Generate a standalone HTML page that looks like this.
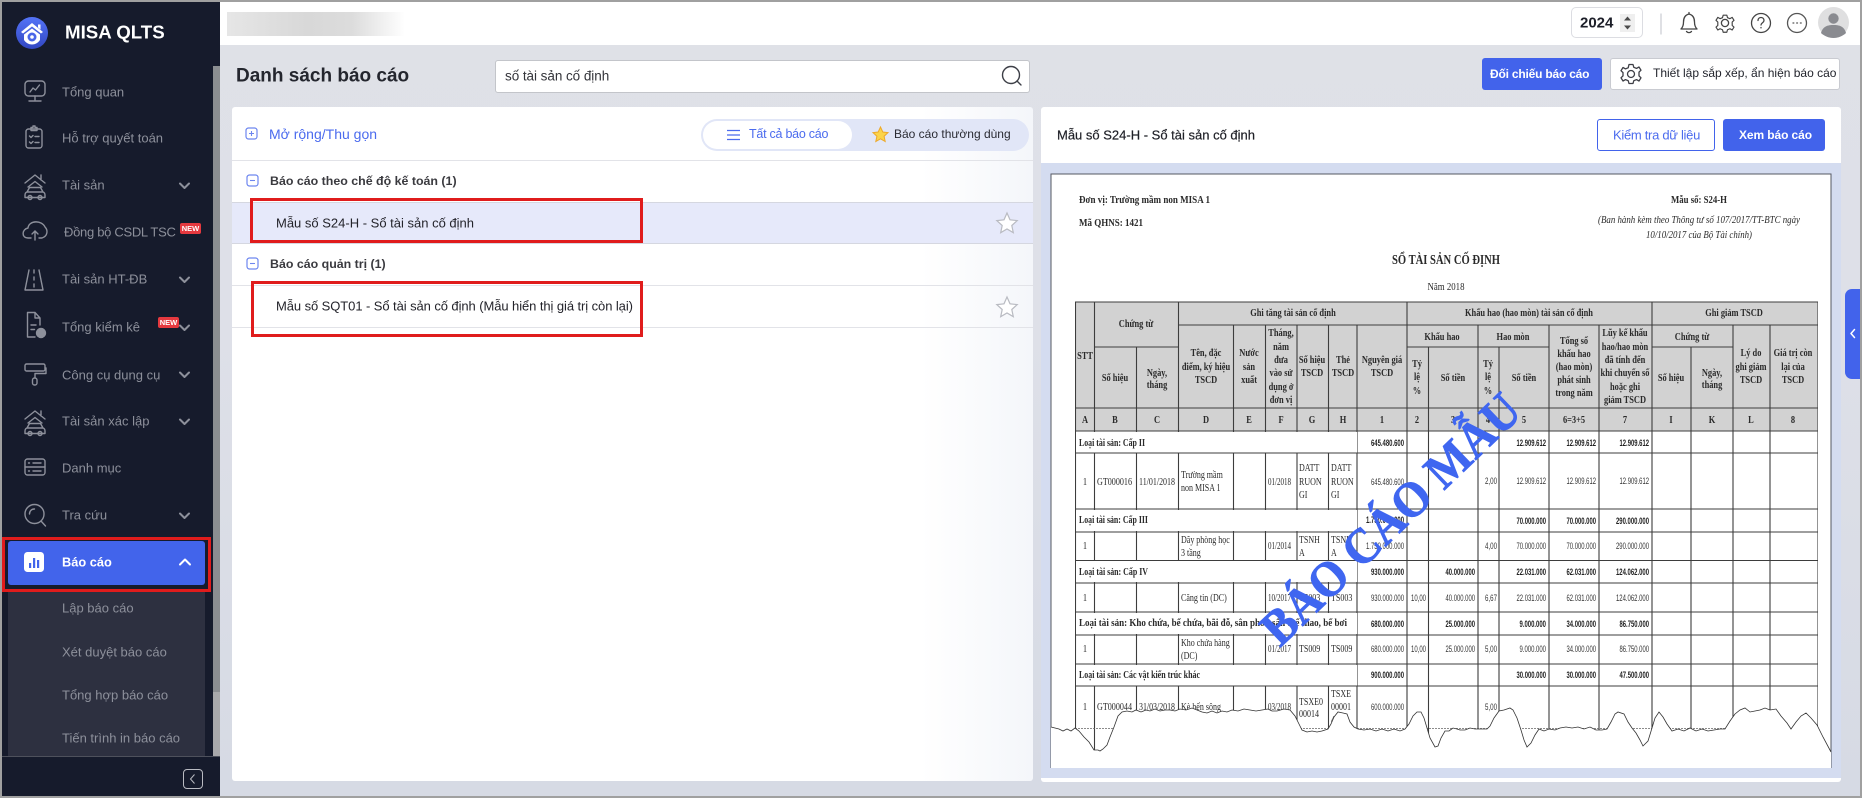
<!DOCTYPE html>
<html lang="vi"><head><meta charset="utf-8"><title>Danh sách báo cáo</title>
<style>
*{box-sizing:border-box}
html,body{margin:0;padding:0;width:1862px;height:798px;overflow:hidden;background:#a0a0a0;font-family:"Liberation Sans","Noto Sans CJK SC",sans-serif}
.b{position:absolute}
.t{position:absolute;white-space:nowrap;line-height:1;transform:translateY(-50%)}
.s{color:#8d909b;font-size:13px;left:62px}
.g{font-size:12.400px;font-weight:700;color:#3a3a3f}
.i{font-size:13px;color:#23232a;left:276px}
.line{position:absolute;height:1px;background:#e2e3e8;left:232px;width:801px}
svg{position:absolute;overflow:visible}
.ic{fill:none;stroke:#8d909b;stroke-width:1.4;stroke-linecap:round;stroke-linejoin:round}
.ch{fill:none;stroke:#8d909b;stroke-width:2;stroke-linecap:round;stroke-linejoin:round}
.d text{font-family:"Liberation Serif",serif;font-size:10px;fill:#2a2a2a}
.d .h{font-weight:700;text-anchor:middle}
.d .l{font-weight:700}
.d .c{text-anchor:middle}
.d .n{font-family:"Liberation Sans",sans-serif;font-size:9.500px;text-anchor:end;fill:#333}
.d .nb{font-family:"Liberation Sans",sans-serif;font-size:9.500px;font-weight:700;text-anchor:end;fill:#222}
.d .tb .h,.d .tb .c{transform-box:fill-box;transform-origin:center;transform:scaleX(.84)}
.d .tb .p{transform-box:fill-box;transform-origin:left center;transform:scaleX(.8)}
</style></head><body>
<!-- app background -->
<div class="b" style="left:220px;top:2px;width:1640px;height:794px;background:linear-gradient(180deg,#dfe1e7 0,#dee0e8 40%,#d6dae4 100%)"></div>
<!-- header -->
<div class="b" style="left:220px;top:2px;width:1640px;height:43px;background:#fff"></div>
<div class="b" style="left:227px;top:12px;width:178px;height:24px;background:linear-gradient(90deg,#e6e6e6,#d8d8d8 45%,#dcdcdc 70%,#fff 100%)"></div>
<div class="b" style="left:1571px;top:7px;width:72px;height:31px;border:1px solid #dcdde2;border-radius:5px;background:#fff"></div>
<div class="t" style="left:1580px;top:23px;font-size:15px;font-weight:700;color:#1d1f29">2024</div>
<div class="b" style="left:1620px;top:14px;width:15px;height:18px;background:#efefef"></div>
<svg style="left:0;top:0" width="1862" height="50"><path d="M1624 20.500l3.500-4 3.500 4zM1624 25.500l3.500 4 3.500-4z" fill="#4a4a4a"/>
<path d="M1661 13.500v21" stroke="#c9ccd2" stroke-width="1.2"/>
<g fill="none" stroke="#444" stroke-width="1.3" stroke-linecap="round" stroke-linejoin="round">
<path d="M1681 29h16c-2-2-2.500-4-2.500-7 0-4-1.500-7-5.500-8-4 1-5.500 4-5.500 8 0 3-.5 5-2.500 7zM1686.500 31.500c1.500 1.500 3.500 1.500 5 0M1689 14v-1.500"/>
<circle cx="1725" cy="23" r="3.600"/><path d="M1723 13.500h4l.8 2.800 2.700 1.100 2.500-1.400 2 3.200-2 1.900v3.800l2 1.900-2 3.200-2.500-1.400-2.700 1.100-.8 2.800h-4l-.8-2.800-2.700-1.100-2.500 1.400-2-3.200 2-1.900v-3.800l-2-1.900 2-3.200 2.500 1.400 2.700-1.100z" transform="translate(172.500 3) scale(.9)"/>
<circle cx="1761" cy="23" r="9.500"/><path d="M1758 20.500c0-4 6-4 6 0 0 2.200-3 2.300-3 4.500"/><path d="M1761 27.500v.4"/>
<circle cx="1797" cy="23" r="9.500" stroke="#555"/></g>
<path d="M1793 23h.8M1796.700 23h.8M1800.400 23h.8" stroke="#555" stroke-width="1.300" stroke-linecap="round"/>
<circle cx="1833.500" cy="22.500" r="15.500" fill="#dfdfe0"/><circle cx="1833.500" cy="18.500" r="5.200" fill="#8a8b90"/><path d="M1821 33c2-7 7-8 12.500-8s10.500 1 12.500 8c-3 3-8 5-12.500 5s-9.500-2-12.500-5z" fill="#8a8b90"/>
</svg>

<!-- title row -->
<div class="t" style="left:236px;top:76px;font-size:19px;font-weight:700;color:#24262e">Danh sách báo cáo</div>
<div class="b" style="left:495px;top:60px;width:535px;height:33px;background:#fff;border:1px solid #c3c5ca;border-radius:3px"></div>
<div class="t" style="left:505px;top:76px;font-size:13.500px;color:#33343a;letter-spacing:-.05px">số tài sản cố định</div>
<svg style="left:1000px;top:64px" width="24" height="24"><circle cx="11" cy="11" r="8.500" fill="none" stroke="#3d3f47" stroke-width="1.400"/><path d="M17 17l4 4" stroke="#3d3f47" stroke-width="1.400" stroke-linecap="round"/></svg>
<div class="b" style="left:1482px;top:58px;width:120px;height:32px;background:#4263eb;border-radius:3px"></div>
<div class="t" style="left:1490px;top:74px;font-size:12px;font-weight:700;color:#fff;letter-spacing:-.2px">Đối chiếu báo cáo</div>
<div class="b" style="left:1610px;top:58px;width:230px;height:32px;background:#fff;border:1px solid #c9cbd1;border-radius:3px"></div>
<svg style="left:1620px;top:63px" width="22" height="22"><g fill="none" stroke="#3e3f46" stroke-width="1.300" stroke-linejoin="round"><circle cx="11" cy="11" r="3.500"/><path d="M9 1.500h4l.8 2.800 2.700 1.100 2.500-1.400 2 3.200-2 1.900v3.800l2 1.900-2 3.200-2.500-1.400-2.700 1.100-.8 2.800h-4l-.8-2.800-2.700-1.100-2.500 1.400-2-3.200 2-1.900V9.600L1 7.700l2-3.200 2.500 1.400 2.700-1.100z"/></g></svg>
<div class="t" style="left:1653px;top:73px;font-size:12px;color:#22242c">Thiết lập sắp xếp, ẩn hiện báo cáo</div>

<!-- left panel -->
<div class="b" style="left:232px;top:107px;width:801px;height:674px;background:linear-gradient(90deg,#fff 86%,#f4f6fa 100%);border-radius:3px"></div>
<svg style="left:244px;top:126px" width="16" height="16"><rect x="2" y="2" width="11" height="11" rx="2.500" fill="none" stroke="#6d86ef" stroke-width="1.200"/><path d="M5 7.500h5M7.500 5v5" stroke="#6d86ef" stroke-width="1.100"/></svg>
<div class="t" style="left:269px;top:134px;font-size:14px;color:#4b6bee">Mở rộng/Thu gọn</div>
<div class="b" style="left:701px;top:119px;width:328px;height:32px;background:#e1e6f7;border-radius:16px"></div>
<div class="b" style="left:703px;top:121px;width:149px;height:28px;background:#fff;border-radius:14px"></div>
<svg style="left:726px;top:128px" width="16" height="14"><path d="M1 2.500h13M1 7h13M1 11.500h13" stroke="#4b6bee" stroke-width="1.200"/></svg>
<div class="t" style="left:749px;top:134px;font-size:12.500px;color:#4b6bee;letter-spacing:-.25px">Tất cả báo cáo</div>
<svg style="left:871.500px;top:126px" width="17" height="17"><path d="M8.500 1l2.300 5 5.200.6-3.900 3.600 1.100 5.300-4.700-2.700-4.700 2.700 1.100-5.300L1 6.600 6.200 6z" fill="#fbd44a" stroke="#eda92b" stroke-width="1"/></svg>
<div class="t" style="left:894px;top:134px;font-size:12px;color:#2a2b33">Báo cáo thường dùng</div>
<div class="line" style="top:160px"></div>
<svg style="left:245px;top:173px" width="16" height="16"><rect x="2" y="2" width="11" height="11" rx="2.500" fill="none" stroke="#6d86ef" stroke-width="1.200"/><path d="M5 7.500h5" stroke="#6d86ef" stroke-width="1.100"/></svg>
<div class="t g" style="left:270px;top:181px">Báo cáo theo chế độ kế toán (1)</div>
<div class="b" style="left:232px;top:203px;width:801px;height:40px;background:#e6e9fa"></div>
<div class="line" style="top:202px;background:#d5d7e0"></div>
<div class="t i" style="top:223px">Mẫu số S24-H - Sổ tài sản cố định</div>
<div class="line" style="top:243px;background:#d5d7e0"></div>
<svg style="left:245px;top:256px" width="16" height="16"><rect x="2" y="2" width="11" height="11" rx="2.500" fill="none" stroke="#6d86ef" stroke-width="1.200"/><path d="M5 7.500h5" stroke="#6d86ef" stroke-width="1.100"/></svg>
<div class="t g" style="left:270px;top:264px">Báo cáo quản trị (1)</div>
<div class="line" style="top:285px"></div>
<div class="t i" style="top:306px;letter-spacing:-.08px">Mẫu số SQT01 - Sổ tài sản cố định (Mẫu hiển thị giá trị còn lại)</div>
<div class="line" style="top:327px"></div>
<svg style="left:995px;top:211px" width="24" height="24"><path d="M12 2l3 6.800 7.200.8-5.400 4.900 1.500 7.200-6.300-3.700-6.300 3.700 1.500-7.200L1.800 9.600 9 8.800z" fill="#fff" stroke="#b9bbc2" stroke-width="1.200"/></svg>
<svg style="left:995px;top:295px" width="24" height="24"><path d="M12 2l3 6.800 7.200.8-5.400 4.900 1.500 7.200-6.300-3.700-6.300 3.700 1.500-7.200L1.800 9.600 9 8.800z" fill="#fff" stroke="#b9bbc2" stroke-width="1.200"/></svg>
<div class="b" style="left:250px;top:198px;width:393px;height:45px;border:3px solid #e01c1c"></div>
<div class="b" style="left:251px;top:281px;width:392px;height:56px;border:3px solid #e01c1c"></div>

<!-- right panel -->
<div class="b" style="left:1041px;top:107px;width:800px;height:675px;background:#fff;border-radius:3px"></div>
<div class="b" style="left:1041px;top:163px;width:800px;height:615px;background:#d4dcf0"></div>
<div class="t" style="left:1057px;top:135px;font-size:13px;font-weight:400;color:#1f2027;-webkit-text-stroke:.2px #1f2027">Mẫu số S24-H - Sổ tài sản cố định</div>
<div class="b" style="left:1597px;top:119px;width:118px;height:32px;background:#fff;border:1px solid #4263eb;border-radius:3px"></div>
<div class="t" style="left:1613px;top:135px;font-size:13px;color:#4b6bee;letter-spacing:-.3px">Kiểm tra dữ liệu</div>
<div class="b" style="left:1723px;top:119px;width:102px;height:32px;background:#4263eb;border-radius:3px"></div>
<div class="t" style="left:1739px;top:135px;font-size:12px;font-weight:700;color:#fff;letter-spacing:-.1px">Xem báo cáo</div>

<!-- document -->
<svg class="d" style="left:0;top:0" width="1862" height="798">
<defs><filter id="bl" x="0" y="0" width="1" height="1"><feGaussianBlur stdDeviation=".28"/></filter></defs>
<rect x="1051" y="174" width="780" height="594" fill="#fff"/>
<path d="M1051 768V174H1831V768" fill="none" stroke="#555862" stroke-width="1"/>
<g filter="url(#bl)" class="tb">
<rect x="1075" y="302" width="743" height="129" fill="#d2d2d2"/>
<text x="1079" y="203" class="l" style="font-size:10.500px" textLength="131" lengthAdjust="spacingAndGlyphs">Đơn vị:  Trường mầm non MISA 1</text>
<text x="1079" y="226" class="l" style="font-size:10.500px" textLength="64" lengthAdjust="spacingAndGlyphs">Mã QHNS:  1421</text>
<text x="1446" y="264" class="l" style="font-size:13.500px;text-anchor:middle" textLength="108" lengthAdjust="spacingAndGlyphs">SỔ TÀI SẢN CỐ ĐỊNH</text>
<text x="1446" y="290" style="font-size:10.500px;text-anchor:middle" textLength="37" lengthAdjust="spacingAndGlyphs">Năm 2018</text>
<text x="1699" y="203" class="l" style="font-size:10.500px;text-anchor:middle" textLength="56" lengthAdjust="spacingAndGlyphs">Mẫu số: S24-H</text>
<text x="1699" y="223" style="font-size:10.500px;font-style:italic;text-anchor:middle" textLength="202" lengthAdjust="spacingAndGlyphs">(Ban hành kèm theo Thông tư số 107/2017/TT-BTC ngày</text>
<text x="1699" y="238" style="font-size:10.500px;font-style:italic;text-anchor:middle" textLength="106" lengthAdjust="spacingAndGlyphs">10/10/2017 của Bộ Tài chính)</text>

<g fill="none" stroke="#3c3c3c" stroke-width="1.100">
<path d="M1075 302H1818M1178 325H1818M1094 347H1178M1407 347H1549M1652 347H1733M1075 408H1818M1075 431H1818M1075 453H1818M1075 509H1818M1075 532H1818M1075 560.500H1818M1075 583H1818M1075 612H1818M1075 635H1818M1075 664H1818M1075 686H1818"/>
<path d="M1075.500 302V765M1094.500 302V765M1136.500 347V765M1178.500 302V765M1233.500 325V765M1265.500 325V765M1297 325V765M1328.500 325V765M1357 325V765M1407 302V765M1428.500 347V765M1478 325V765M1499 347V765M1549 325V765M1599 325V765M1652 302V765M1691 347V765M1733 325V765M1770 325V765M1818 302V765"/>
</g>
<rect x="1076" y="432" width="281" height="20.500" fill="#fff"/><rect x="1076" y="510" width="281" height="21" fill="#fff"/><rect x="1076" y="561" width="281" height="21" fill="#fff"/><rect x="1076" y="613" width="281" height="21" fill="#fff"/><rect x="1076" y="665" width="281" height="20.500" fill="#fff"/>

<text x="1293" y="316" class="h">Ghi tăng tài sản cố định</text>
<text x="1529" y="316" class="h">Khấu hao (hao mòn) tài sản cố định</text>
<text x="1734" y="316" class="h">Ghi giảm TSCD</text>
<text x="1136" y="327" class="h">Chứng từ</text>
<text x="1085" y="359" class="h">STT</text>
<text x="1442" y="340" class="h">Khấu hao</text><text x="1513" y="340" class="h">Hao mòn</text><text x="1692" y="340" class="h">Chứng từ</text>
<text x="1115" y="381" class="h">Số hiệu</text><text x="1157" y="376" class="h">Ngày,</text><text x="1157" y="388" class="h">tháng</text>
<text x="1206" y="356" class="h">Tên, đặc</text><text x="1206" y="370" class="h">điểm, ký hiệu</text><text x="1206" y="383" class="h">TSCD</text>
<text x="1249" y="356" class="h">Nước</text><text x="1249" y="370" class="h">sản</text><text x="1249" y="383" class="h">xuất</text>
<text x="1281" y="336" class="h">Tháng,</text><text x="1281" y="350" class="h">năm</text><text x="1281" y="363" class="h">đưa</text><text x="1281" y="376" class="h">vào sử</text><text x="1281" y="390" class="h">dụng ở</text><text x="1281" y="403" class="h">đơn vị</text>
<text x="1312" y="363" class="h">Số hiệu</text><text x="1312" y="376" class="h">TSCD</text>
<text x="1343" y="363" class="h">Thẻ</text><text x="1343" y="376" class="h">TSCD</text>
<text x="1382" y="363" class="h">Nguyên giá</text><text x="1382" y="376" class="h">TSCD</text>
<text x="1417" y="367" class="h">Tỷ</text><text x="1417" y="380" class="h">lệ</text><text x="1417" y="394" class="h">%</text>
<text x="1453" y="381" class="h">Số tiền</text>
<text x="1488" y="367" class="h">Tỷ</text><text x="1488" y="380" class="h">lệ</text><text x="1488" y="394" class="h">%</text>
<text x="1524" y="381" class="h">Số tiền</text>
<text x="1574" y="344" class="h">Tổng số</text><text x="1574" y="357" class="h">khấu hao</text><text x="1574" y="370" class="h">(hao mòn)</text><text x="1574" y="383" class="h">phát sinh</text><text x="1574" y="396" class="h">trong năm</text>
<text x="1625" y="336" class="h">Lũy kế khấu</text><text x="1625" y="350" class="h">hao/hao mòn</text><text x="1625" y="363" class="h">đã tính đến</text><text x="1625" y="376" class="h">khi chuyển số</text><text x="1625" y="390" class="h">hoặc ghi</text><text x="1625" y="403" class="h">giảm TSCD</text>
<text x="1671" y="381" class="h">Số hiệu</text><text x="1712" y="376" class="h">Ngày,</text><text x="1712" y="388" class="h">tháng</text>
<text x="1751" y="356" class="h">Lý do</text><text x="1751" y="370" class="h">ghi giảm</text><text x="1751" y="383" class="h">TSCD</text>
<text x="1793" y="356" class="h">Giá trị còn</text><text x="1793" y="370" class="h">lại của</text><text x="1793" y="383" class="h">TSCD</text>

<g><text x="1085" y="423" class="h">A</text><text x="1115" y="423" class="h">B</text><text x="1157" y="423" class="h">C</text><text x="1206" y="423" class="h">D</text><text x="1249" y="423" class="h">E</text><text x="1281" y="423" class="h">F</text><text x="1312" y="423" class="h">G</text><text x="1343" y="423" class="h">H</text><text x="1382" y="423" class="h">1</text><text x="1417" y="423" class="h">2</text><text x="1453" y="423" class="h">3</text><text x="1488" y="423" class="h">4</text><text x="1524" y="423" class="h">5</text><text x="1574" y="423" class="h">6=3+5</text><text x="1625" y="423" class="h">7</text><text x="1671" y="423" class="h">I</text><text x="1712" y="423" class="h">K</text><text x="1751" y="423" class="h">L</text><text x="1793" y="423" class="h">8</text></g>

<text x="1079" y="446" class="l" textLength="66" lengthAdjust="spacingAndGlyphs">Loại tài sản: Cấp II</text>
<text x="1404" y="446" class="nb" textLength="33" lengthAdjust="spacingAndGlyphs">645.480.600</text>
<text x="1546" y="446" class="nb" textLength="29.500" lengthAdjust="spacingAndGlyphs">12.909.612</text><text x="1596" y="446" class="nb" textLength="29.500" lengthAdjust="spacingAndGlyphs">12.909.612</text><text x="1649" y="446" class="nb" textLength="29.500" lengthAdjust="spacingAndGlyphs">12.909.612</text>

<text x="1085" y="485" class="c">1</text><text x="1097" y="485" textLength="35" lengthAdjust="spacingAndGlyphs">GT000016</text><text x="1139" y="485" textLength="36" lengthAdjust="spacingAndGlyphs">11/01/2018</text>
<text x="1181" y="478" class="p">Trường mầm</text><text x="1181" y="491" class="p">non MISA 1</text><text x="1268" y="485" textLength="23" lengthAdjust="spacingAndGlyphs">01/2018</text>
<text x="1299" y="471" class="p">DATT</text><text x="1299" y="485" class="p">RUON</text><text x="1299" y="498" class="p">GI</text><text x="1331" y="471" class="p">DATT</text><text x="1331" y="485" class="p">RUON</text><text x="1331" y="498" class="p">GI</text>
<text x="1404" y="485" class="n" textLength="33" lengthAdjust="spacingAndGlyphs">645.480.600</text><text x="1497" y="484" class="n" textLength="12" lengthAdjust="spacingAndGlyphs">2,00</text>
<text x="1546" y="484" class="n" textLength="29.500" lengthAdjust="spacingAndGlyphs">12.909.612</text><text x="1596" y="484" class="n" textLength="29.500" lengthAdjust="spacingAndGlyphs">12.909.612</text><text x="1649" y="484" class="n" textLength="29.500" lengthAdjust="spacingAndGlyphs">12.909.612</text>

<text x="1079" y="523" class="l" textLength="69" lengthAdjust="spacingAndGlyphs">Loại tài sản: Cấp III</text>
<text x="1404" y="523" class="nb" textLength="38" lengthAdjust="spacingAndGlyphs">1.750.000.000</text>
<text x="1546" y="524" class="nb" textLength="29.500" lengthAdjust="spacingAndGlyphs">70.000.000</text><text x="1596" y="524" class="nb" textLength="29.500" lengthAdjust="spacingAndGlyphs">70.000.000</text><text x="1649" y="524" class="nb" textLength="33" lengthAdjust="spacingAndGlyphs">290.000.000</text>

<text x="1085" y="549" class="c">1</text><text x="1181" y="543" class="p">Dãy phòng học</text><text x="1181" y="556" class="p">3 tầng</text><text x="1268" y="549" textLength="23" lengthAdjust="spacingAndGlyphs">01/2014</text>
<text x="1299" y="543" class="p">TSNH</text><text x="1299" y="556" class="p">A</text><text x="1331" y="543" class="p">TSNH</text><text x="1331" y="556" class="p">A</text>
<text x="1404" y="549" class="n" textLength="38" lengthAdjust="spacingAndGlyphs">1.750.000.000</text><text x="1497" y="549" class="n" textLength="12" lengthAdjust="spacingAndGlyphs">4,00</text>
<text x="1546" y="549" class="n" textLength="29.500" lengthAdjust="spacingAndGlyphs">70.000.000</text><text x="1596" y="549" class="n" textLength="29.500" lengthAdjust="spacingAndGlyphs">70.000.000</text><text x="1649" y="549" class="n" textLength="33" lengthAdjust="spacingAndGlyphs">290.000.000</text>

<text x="1079" y="575" class="l" textLength="69" lengthAdjust="spacingAndGlyphs">Loại tài sản: Cấp IV</text>
<text x="1404" y="575" class="nb" textLength="33" lengthAdjust="spacingAndGlyphs">930.000.000</text><text x="1475" y="575" class="nb" textLength="29.500" lengthAdjust="spacingAndGlyphs">40.000.000</text>
<text x="1546" y="575" class="nb" textLength="29.500" lengthAdjust="spacingAndGlyphs">22.031.000</text><text x="1596" y="575" class="nb" textLength="29.500" lengthAdjust="spacingAndGlyphs">62.031.000</text><text x="1649" y="575" class="nb" textLength="33" lengthAdjust="spacingAndGlyphs">124.062.000</text>

<text x="1085" y="601" class="c">1</text><text x="1181" y="601" class="p">Căng tin (DC)</text><text x="1268" y="601" textLength="23" lengthAdjust="spacingAndGlyphs">10/2017</text><text x="1299" y="601" class="p">TS003</text><text x="1331" y="601" class="p">TS003</text>
<text x="1404" y="601" class="n" textLength="33" lengthAdjust="spacingAndGlyphs">930.000.000</text><text x="1426" y="601" class="n" textLength="15" lengthAdjust="spacingAndGlyphs">10,00</text><text x="1475" y="601" class="n" textLength="29.500" lengthAdjust="spacingAndGlyphs">40.000.000</text><text x="1497" y="601" class="n" textLength="12" lengthAdjust="spacingAndGlyphs">6,67</text>
<text x="1546" y="601" class="n" textLength="29.500" lengthAdjust="spacingAndGlyphs">22.031.000</text><text x="1596" y="601" class="n" textLength="29.500" lengthAdjust="spacingAndGlyphs">62.031.000</text><text x="1649" y="601" class="n" textLength="33" lengthAdjust="spacingAndGlyphs">124.062.000</text>

<text x="1079" y="626" class="l" textLength="268" lengthAdjust="spacingAndGlyphs">Loại tài sản: Kho chứa, bể chứa, bãi đỗ, sân phơi, sân thể thao, bể bơi</text>
<text x="1404" y="627" class="nb" textLength="33" lengthAdjust="spacingAndGlyphs">680.000.000</text><text x="1475" y="627" class="nb" textLength="29.500" lengthAdjust="spacingAndGlyphs">25.000.000</text>
<text x="1546" y="627" class="nb" textLength="26.500" lengthAdjust="spacingAndGlyphs">9.000.000</text><text x="1596" y="627" class="nb" textLength="29.500" lengthAdjust="spacingAndGlyphs">34.000.000</text><text x="1649" y="627" class="nb" textLength="29.500" lengthAdjust="spacingAndGlyphs">86.750.000</text>

<text x="1085" y="652" class="c">1</text><text x="1181" y="646" class="p">Kho chứa hàng</text><text x="1181" y="659" class="p">(DC)</text><text x="1268" y="652" textLength="23" lengthAdjust="spacingAndGlyphs">01/2017</text><text x="1299" y="652" class="p">TS009</text><text x="1331" y="652" class="p">TS009</text>
<text x="1404" y="652" class="n" textLength="33" lengthAdjust="spacingAndGlyphs">680.000.000</text><text x="1426" y="652" class="n" textLength="15" lengthAdjust="spacingAndGlyphs">10,00</text><text x="1475" y="652" class="n" textLength="29.500" lengthAdjust="spacingAndGlyphs">25.000.000</text><text x="1497" y="652" class="n" textLength="12" lengthAdjust="spacingAndGlyphs">5,00</text>
<text x="1546" y="652" class="n" textLength="26.500" lengthAdjust="spacingAndGlyphs">9.000.000</text><text x="1596" y="652" class="n" textLength="29.500" lengthAdjust="spacingAndGlyphs">34.000.000</text><text x="1649" y="652" class="n" textLength="29.500" lengthAdjust="spacingAndGlyphs">86.750.000</text>

<text x="1079" y="678" class="l" textLength="121" lengthAdjust="spacingAndGlyphs">Loại tài sản: Các vật kiến trúc khác</text>
<text x="1404" y="678" class="nb" textLength="33" lengthAdjust="spacingAndGlyphs">900.000.000</text>
<text x="1546" y="678" class="nb" textLength="29.500" lengthAdjust="spacingAndGlyphs">30.000.000</text><text x="1596" y="678" class="nb" textLength="29.500" lengthAdjust="spacingAndGlyphs">30.000.000</text><text x="1649" y="678" class="nb" textLength="29.500" lengthAdjust="spacingAndGlyphs">47.500.000</text>

<text x="1085" y="710" class="c">1</text><text x="1097" y="710" textLength="35" lengthAdjust="spacingAndGlyphs">GT000044</text><text x="1139" y="710" textLength="36" lengthAdjust="spacingAndGlyphs">31/03/2018</text><text x="1181" y="710" class="p">Kè bến sông</text><text x="1268" y="710" textLength="23" lengthAdjust="spacingAndGlyphs">03/2018</text>
<text x="1299" y="705" class="p">TSXE0</text><text x="1299" y="717" class="p">00014</text><text x="1331" y="697" class="p">TSXE</text><text x="1331" y="710" class="p">00001</text><text x="1331" y="723" class="p">4</text>
<text x="1404" y="710" class="n" textLength="33" lengthAdjust="spacingAndGlyphs">600.000.000</text><text x="1497" y="710" class="n" textLength="12" lengthAdjust="spacingAndGlyphs">5,00</text>
<path d="M1075 728.500H1818" stroke="#666" stroke-width=".8" stroke-dasharray="2 1"/>
</g>
<!-- torn edge -->
<path d="M1051 727L1055 728 1059 729 1063 731 1067 729 1071 731 1075 728 1079 731 1084 737 1089 742 1094 750 1098 750 1100 751 1103 749 1107 745 1110 737 1114 727 1118 716 1122 712 1127 711 1132 712 1136 710 1141 712 1146 710 1150 711 1155 709 1160 711 1165 710 1170 710 1175 711 1180 709 1186 710 1192 708 1197 710 1202 712 1207 713 1212 711 1217 713 1222 711 1227 712 1232 710 1238 711 1244 709 1250 710 1256 711 1262 710 1268 709 1272 711 1277 711 1284 709 1290 710 1295 716 1299 724 1302 730 1307 732 1312 731 1317 732 1322 731 1328 729 1331 724 1334 717 1338 712 1343 713 1347 714 1350 722 1354 727 1358 729 1364 730 1370 729 1376 731 1382 729 1388 731 1394 729 1400 731 1405 729 1409 724 1413 716 1417 712 1421 712 1424 718 1427 728 1430 738 1435 747 1438 746 1441 738 1445 731 1449 731 1453 728 1457 729 1460 730 1465 730 1470 728 1475 729 1480 729 1487 729 1490 726 1494 718 1499 711 1504 710 1510 708 1513 710 1517 718 1521 730 1524 740 1527 747 1531 743 1535 735 1539 729 1544 731 1549 729 1555 730 1560 728 1566 727 1572 728 1578 727 1584 729 1590 727 1596 730 1602 730 1607 729 1611 722 1615 714 1618 712 1624 714 1628 722 1632 728 1636 733 1640 740 1643 746 1648 741 1652 728 1655 718 1659 712 1663 717 1667 724 1672 731 1678 729 1684 731 1690 728 1696 731 1702 729 1708 731 1714 730 1720 729 1725 729 1730 721 1735 714 1740 710 1745 708 1750 712 1755 711 1760 710 1765 708 1770 710 1776 709 1781 716 1787 723 1791 729 1796 722 1801 716 1806 713 1811 718 1817 725 1823 737 1831 752V768H1051z" fill="#fff" stroke="none"/>
<path d="M1051 727L1055 728 1059 729 1063 731 1067 729 1071 731 1075 728 1079 731 1084 737 1089 742 1094 750 1098 750 1100 751 1103 749 1107 745 1110 737 1114 727 1118 716 1122 712 1127 711 1132 712 1136 710 1141 712 1146 710 1150 711 1155 709 1160 711 1165 710 1170 710 1175 711 1180 709 1186 710 1192 708 1197 710 1202 712 1207 713 1212 711 1217 713 1222 711 1227 712 1232 710 1238 711 1244 709 1250 710 1256 711 1262 710 1268 709 1272 711 1277 711 1284 709 1290 710 1295 716 1299 724 1302 730 1307 732 1312 731 1317 732 1322 731 1328 729 1331 724 1334 717 1338 712 1343 713 1347 714 1350 722 1354 727 1358 729 1364 730 1370 729 1376 731 1382 729 1388 731 1394 729 1400 731 1405 729 1409 724 1413 716 1417 712 1421 712 1424 718 1427 728 1430 738 1435 747 1438 746 1441 738 1445 731 1449 731 1453 728 1457 729 1460 730 1465 730 1470 728 1475 729 1480 729 1487 729 1490 726 1494 718 1499 711 1504 710 1510 708 1513 710 1517 718 1521 730 1524 740 1527 747 1531 743 1535 735 1539 729 1544 731 1549 729 1555 730 1560 728 1566 727 1572 728 1578 727 1584 729 1590 727 1596 730 1602 730 1607 729 1611 722 1615 714 1618 712 1624 714 1628 722 1632 728 1636 733 1640 740 1643 746 1648 741 1652 728 1655 718 1659 712 1663 717 1667 724 1672 731 1678 729 1684 731 1690 728 1696 731 1702 729 1708 731 1714 730 1720 729 1725 729 1730 721 1735 714 1740 710 1745 708 1750 712 1755 711 1760 710 1765 708 1770 710 1776 709 1781 716 1787 723 1791 729 1796 722 1801 716 1806 713 1811 718 1817 725 1823 737 1831 752" fill="none" stroke="#333" stroke-width=".8"/>
<text x="0" y="0" transform="translate(1280 648) rotate(-43.800)" style="font-family:'Liberation Serif',serif;font-weight:700;font-size:50px;fill:#3f66f0;stroke:#3f66f0;stroke-width:.8px" textLength="338" lengthAdjust="spacingAndGlyphs">BÁO CÁO MẪU</text>
</svg>

<!-- right handle -->
<div class="b" style="left:1845px;top:289px;width:15px;height:90px;background:#4263eb;border-radius:7px 0 0 7px"></div>
<svg style="left:1849px;top:328px" width="8" height="11"><path d="M5.500 1.500L2 5.500l3.500 4" fill="none" stroke="#fff" stroke-width="1.500" stroke-linecap="round" stroke-linejoin="round"/></svg>

<!-- sidebar -->
<div class="b" style="left:2px;top:2px;width:218px;height:794px;background:#161b2c"></div>
<div class="b" style="left:213px;top:66px;width:7px;height:626px;background:#8b8e91"></div>
<div class="b" style="left:213px;top:692px;width:7px;height:64px;background:#a9a9ab"></div>
<svg style="left:16px;top:17px" width="32" height="32"><defs><linearGradient id="lg" x1="0" y1="0" x2="0" y2="1"><stop offset="0" stop-color="#5473f7"/><stop offset="1" stop-color="#3247c2"/></linearGradient></defs><circle cx="16" cy="16" r="16" fill="url(#lg)"/><path d="M5 15L16 6l11 9-2 1.500L16 9.500 7 16.500z" fill="#fff"/><path d="M22 7.500h2.500v5L22 10.500z" fill="#fff"/><path d="M8 17.500l8-6 8 6V23c-2 3-5 4.500-8 4.500S10 26 8 23z" fill="#fff"/><circle cx="16" cy="20" r="4.500" fill="#4a66e8"/><circle cx="16" cy="20" r="1.800" fill="#fff"/></svg>
<div class="t" style="left:65px;top:33px;font-size:18.700px;font-weight:700;color:#fff">MISA QLTS</div>

<svg style="left:0;top:0" width="220" height="798">
<g class="ic">
<rect x="25" y="81" width="20" height="15" rx="3.500"/><path d="M35 96v4M29 101h12M30 92l3-4 2.500 2 4-5"/>
<rect x="26" y="129" width="16" height="19" rx="2.500"/><path d="M31 129v-1.500h2v-1.500h2v1.500h2V129v1.500h-6zM29.500 136l1.500 1.500 2-2M35 136.500h4M29.500 142l1.500 1.500 2-2M35 142.500h4"/>
<path d="M25 183l10-8 10 8M41 175v5M28 187l7-5.500 7 5.500M27 192l2.500-4.500h11l2.500 4.500c1.500.5 2 1.500 2 3v2.500H25v-2.500c0-1.500.5-2.500 2-3zM27 192h16"/><circle cx="30" cy="197.500" r="2"/><circle cx="40" cy="197.500" r="2"/>
<path d="M31 238h-3c-7 0-6-9 0-10 1-8 14-8 17-1 3 3 3 9-3 11h-3M35 240v-9M32 234l3-3 3 3"/>
<path d="M29 270L25 290h18l-4-20M34 270v3M34 277v3M34 284v3"/>
<path d="M40 325v-7l-5-5.500h-7.500v24.500H35M35 312.500V318h5M31 325h5M31 329.500h3.500"/>
<circle cx="41" cy="333" r="4.500" fill="#8d909b"/>
<rect x="25" y="364" width="20" height="7" rx="1.500"/><path d="M45 368h1v5.500H35v4"/><rect x="32.500" y="378" width="4.500" height="7" rx="2"/>
<path d="M25 419l10-8 10 8M41 411v5M28 423l7-5.500 7 5.500M27 428l2.500-4.500h11l2.500 4.500c1.500.5 2 1.500 2 3v2.500H25v-2.500c0-1.500.5-2.500 2-3zM27 428h16"/><circle cx="30" cy="433.500" r="2"/><circle cx="40" cy="433.500" r="2"/>
<rect x="25" y="459" width="20" height="16" rx="2.500"/><path d="M25 467h20M28.500 463h1M33 463h8M28.500 471h1M33 471h8"/>
<circle cx="34.500" cy="514" r="9.500"/><path d="M41 521l4.500 5M29.500 514c0-3 2-5 5-5"/>
</g>
<path class="ch" d="M180 183.500l4.500 4.500 4.500-4.500M180 277.500l4.500 4.500 4.500-4.500M180 325.500l4.500 4.500 4.500-4.500M180 372.500l4.500 4.500 4.500-4.500M180 419.500l4.500 4.500 4.500-4.500M180 513.500l4.500 4.500 4.500-4.500"/>
</svg>
<div class="t s" style="top:92px">Tổng quan</div>
<div class="t s" style="top:138px">Hỗ trợ quyết toán</div>
<div class="t s" style="top:185px">Tài sản</div>
<div class="t s" style="top:232px;left:64px;letter-spacing:-.3px">Đồng bộ CSDL TSC</div>
<div class="t s" style="top:279px">Tài sản HT-ĐB</div>
<div class="t s" style="top:327px">Tổng kiểm kê</div>
<div class="t s" style="top:375px">Công cụ dụng cụ</div>
<div class="t s" style="top:421px">Tài sản xác lập</div>
<div class="t s" style="top:468px">Danh mục</div>
<div class="t s" style="top:515px">Tra cứu</div>
<div class="b" style="left:180px;top:223px;width:21px;height:11px;background:#e5393f;border-radius:2px;color:#fff;font-size:7.500px;font-weight:700;text-align:center;line-height:11px">NEW</div>
<div class="b" style="left:158px;top:317px;width:21px;height:11px;background:#e5393f;border-radius:2px;color:#fff;font-size:7.500px;font-weight:700;text-align:center;line-height:11px">NEW</div>

<div class="b" style="left:8px;top:590px;width:197px;height:166px;background:#2d3040"></div>
<div class="b" style="left:8px;top:541px;width:197px;height:44px;background:#4264eb;border-radius:3px"></div>
<svg style="left:24px;top:552px" width="20" height="20"><rect width="20" height="20" rx="3.500" fill="#fff"/><path d="M5 16v-5h2.200v5zM9 16V6h2.200v10zM13 16V8h2.200v8z" fill="#4264eb"/></svg>
<div class="t" style="left:62px;top:563px;font-size:12.800px;font-weight:700;color:#fff">Báo cáo</div>
<svg style="left:178px;top:556px" width="14" height="12"><path d="M2 8.500l5-5 5 5" fill="none" stroke="#fff" stroke-width="2" stroke-linecap="round" stroke-linejoin="round"/></svg>
<div class="b" style="left:2px;top:537px;width:209px;height:55px;border:3px solid #e01c1c"></div>
<div class="t s" style="top:608px">Lập báo cáo</div>
<div class="t s" style="top:652px">Xét duyệt báo cáo</div>
<div class="t s" style="top:695px">Tổng hợp báo cáo</div>
<div class="t s" style="top:738px">Tiến trình in báo cáo</div>
<div class="b" style="left:2px;top:756px;width:218px;height:40px;background:#161b2c;border-top:1px solid #4e515c"></div>
<div class="b" style="left:183px;top:769px;width:20px;height:20px;border:1px solid #b9bbc2;border-radius:4px"></div>
<svg style="left:188px;top:773px" width="10" height="12"><path d="M6.500 1.500L2.500 6l4 4.500" fill="none" stroke="#b9bbc2" stroke-width="1"/></svg>
</body></html>
